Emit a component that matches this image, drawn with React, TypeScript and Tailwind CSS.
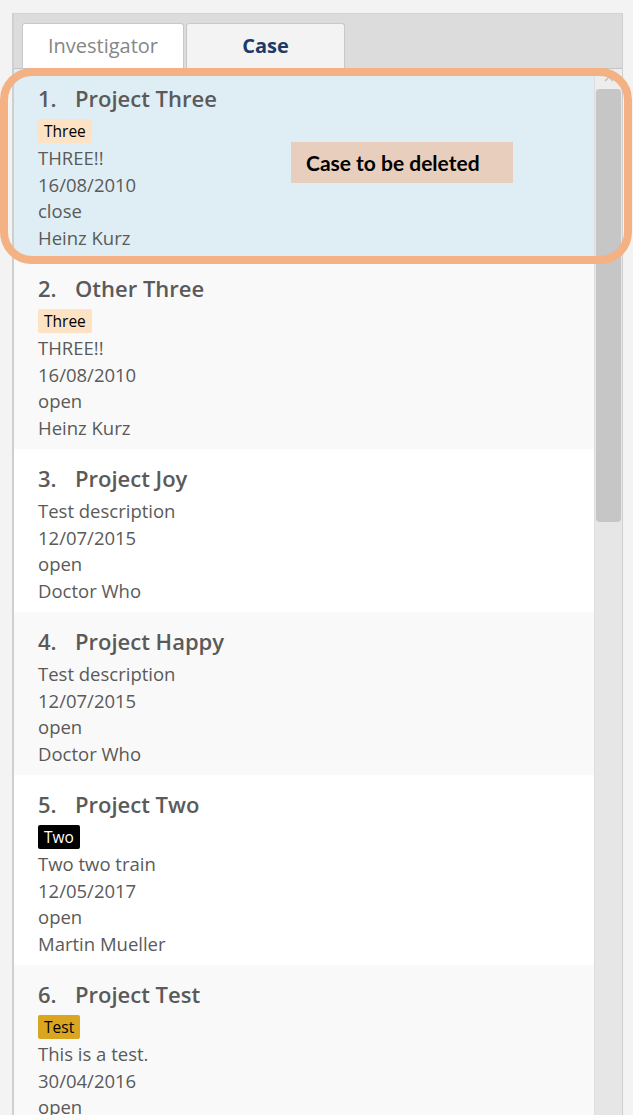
import React from 'react';

interface CaseItem {
  title: string;
  tag?: { label: string; className: string };
  description: string;
  date: string;
  status: string;
  owner: string;
}

const cases: CaseItem[] = [
  { title: 'Project Three', tag: { label: 'Three', className: 'bg-[#fde2c3] text-black' }, description: 'THREE!!', date: '16/08/2010', status: 'close', owner: 'Heinz Kurz' },
  { title: 'Other Three', tag: { label: 'Three', className: 'bg-[#fde2c3] text-black' }, description: 'THREE!!', date: '16/08/2010', status: 'open', owner: 'Heinz Kurz' },
  { title: 'Project Joy', description: 'Test description', date: '12/07/2015', status: 'open', owner: 'Doctor Who' },
  { title: 'Project Happy', description: 'Test description', date: '12/07/2015', status: 'open', owner: 'Doctor Who' },
  { title: 'Project Two', tag: { label: 'Two', className: 'bg-black text-white' }, description: 'Two two train', date: '12/05/2017', status: 'open', owner: 'Martin Mueller' },
  { title: 'Project Test', tag: { label: 'Test', className: 'bg-[#daa520] text-black' }, description: 'This is a test.', date: '30/04/2016', status: 'open', owner: 'Heinz Kurz' },
];

const CaseCard: React.FC<{ item: CaseItem; index: number }> = ({ item, index }) => {
  // first row is the selected one
  const bg = index === 0 ? 'bg-[#dfeef5]' : index % 2 === 1 ? 'bg-[#f9f9f9]' : 'bg-white';
  return (
    <div className={`${bg} pl-[24px] pt-[14px] pb-[8px] text-[#5a5a5a]`}>
      <div className="flex h-[30px] items-center text-[22px] font-semibold leading-[30px]">
        <span className="w-[37px]">{index + 1}.</span>
        <span>{item.title}</span>
      </div>
      {item.tag ? (
        <div className="mt-[6px] mb-[2px] flex">
          <span className={`${item.tag.className} h-[24px] rounded-[2px] px-[6px] text-[15.5px] leading-[24px]`}>{item.tag.label}</span>
        </div>
      ) : (
        <div className="h-[5px]" />
      )}
      <div className="text-[18.5px] leading-[26.5px]">
        <div>{item.description}</div>
        <div>{item.date}</div>
        <div>{item.status}</div>
        <div>{item.owner}</div>
      </div>
    </div>
  );
};

export default function App() {
  return (
    <div className="relative h-[1115px] w-[633px] overflow-hidden bg-[#f3f3f3] pl-[12px] pt-[13px]" style={{ fontFamily: '"Open Sans", "Noto Sans", sans-serif' }}>
      <div className="flex h-[1102px] w-[611px] flex-col border-l-2 border-r border-[#cfcfcf]">
        <div className="flex h-[56px] items-end gap-[2px] border-t border-b border-t-[#d4d4d4] border-b-[#c4c4c4] bg-[#dcdcdc] pl-[8px]">
          <div className="flex h-[45px] w-[162px] items-center justify-center rounded-t-[3px] border border-b-0 border-[#c8c8c8] bg-white text-[20px] text-[#868686]">
            Investigator
          </div>
          <div className="flex h-[45px] w-[159px] items-center justify-center rounded-t-[3px] border border-b-0 border-[#c8c8c8] bg-[#f3f3f3] text-[20px] font-bold text-[#1b3a68]">
            Case
          </div>
        </div>
        <div className="flex min-h-0 flex-1">
          <div className="w-[580px] overflow-hidden">
            {cases.map((c, i) => (
              <CaseCard key={i} item={c} index={i} />
            ))}
          </div>
          <div className="flex w-[28px] flex-col border-l border-[#dedede] bg-[#e6e6e6]">
            <div className="flex h-[20px] items-center justify-center bg-[#ededed]">
              <svg width="10" height="6" viewBox="0 0 10 6">
                <path d="M1 5 L5 1 L9 5" fill="none" stroke="#bdbdbd" strokeWidth="1.5" />
              </svg>
            </div>
            <div className="mx-[1px] h-[433px] rounded-[4px] bg-[#c6c6c6]" />
          </div>
        </div>
      </div>

      {/* annotation overlay */}
      <div className="absolute left-0 top-[68px] h-[196px] w-[632px] rounded-[32px] border-[8px] border-[#f4b183]" />
      <div className="absolute left-[291px] top-[142px] flex h-[41px] w-[222px] items-center bg-[#e8cfbd] pl-[15px] text-[21px] font-bold text-black" style={{ fontFamily: 'Lato, "Liberation Sans", sans-serif' }}>
        Case to be deleted
      </div>
    </div>
  );
}
